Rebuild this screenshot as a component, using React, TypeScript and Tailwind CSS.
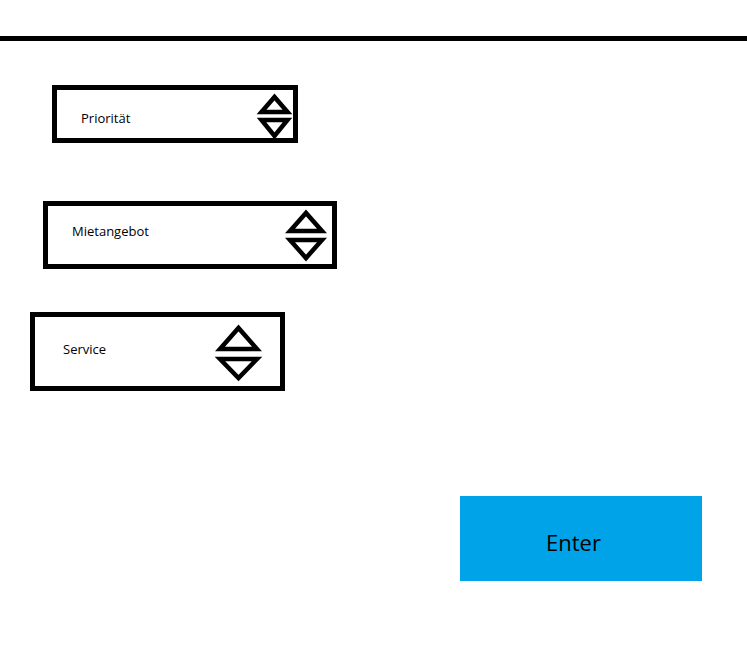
export default function App() {
  return (
    <div className="w-[747px] h-[660px] bg-white overflow-hidden flex flex-col font-['Open_Sans',sans-serif] text-black">
      {/* top rule */}
      <div className="mt-[36px] h-[5px] w-full bg-black" />

      {/* Priorität */}
      <div className="ml-[52px] mt-[44px] w-[246px] h-[58px] border-[5px] border-black flex items-start justify-between pr-[1px]">
        <span className="pl-[24px] pt-[20px] text-[13px] leading-[16px]">Priorität</span>
        <svg width="35" height="50" viewBox="0 0 35 50" className="overflow-visible shrink-0" fill="none" stroke="black" strokeWidth="4.5">
          <path d="M4.5 22 L17.5 7 L30.5 22 Z" />
          <path d="M4.5 30 L30.5 30 L17.5 46 Z" />
        </svg>
      </div>

      {/* Mietangebot */}
      <div className="ml-[43px] mt-[58px] w-[294px] h-[68px] border-[5px] border-black flex items-start justify-between pr-[5px]">
        <span className="pl-[24px] pt-[17px] text-[13px] leading-[16px]">Mietangebot</span>
        <svg width="42" height="58" viewBox="0 0 42 58" className="overflow-visible shrink-0" fill="none" stroke="black" strokeWidth="4.5">
          <path d="M5 25 L21 7 L37 25 Z" />
          <path d="M5 34 L37 34 L21 52 Z" />
        </svg>
      </div>

      {/* Service */}
      <div className="ml-[30px] mt-[43px] w-[255px] h-[79px] border-[5px] border-black flex items-start justify-between pr-[18px]">
        <span className="pl-[28px] pt-[24px] text-[13px] leading-[16px]">Service</span>
        <svg width="47" height="69" viewBox="0 0 47 69" className="overflow-visible shrink-0" fill="none" stroke="black" strokeWidth="4.5">
          <path d="M5 32 L23.5 11 L42 32 Z" />
          <path d="M5 42 L42 42 L23.5 61 Z" />
        </svg>
      </div>

      {/* Enter */}
      <button className="ml-[460px] mt-[105px] w-[242px] h-[85px] bg-[#00a2e8] text-left pl-[86px] flex items-start">
        <span className="mt-[34px] text-[22px] leading-[24px] text-black">Enter</span>
      </button>
    </div>
  );
}
